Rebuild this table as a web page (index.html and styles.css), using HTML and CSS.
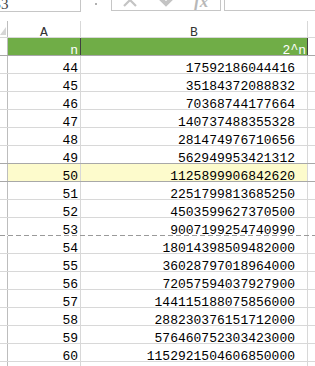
FILE: index.html
```html
<!DOCTYPE html>
<html>
<head>
<meta charset="utf-8">
<link rel="stylesheet" href="styles.css">
</head>
<body>
<div class="toolbar">
  <div class="namebox"><span class="nametext">B3</span></div>
  <div class="dots"><span class="dot"></span></div>
  <div class="fbtns">
    <svg class="ico-x" width="20" height="8" viewBox="0 0 20 8"><path d="M3 -6 L15 6 M15 -6 L3 6" stroke="#c4c4c4" stroke-width="2.2" fill="none"/></svg>
    <svg class="ico-check" width="20" height="8" viewBox="0 0 20 8"><path d="M2 -3 L9 4 L18 -5" stroke="#c4c4c4" stroke-width="4" fill="none"/></svg>
    <span class="fx">fx</span>
  </div>
  <div class="fbar"></div>
</div>

<div class="sheet">
  <div class="row colhdr">
    <div class="c rh"><span class="corner"></span></div>
    <div class="c ca">A</div>
    <div class="c cb">B</div>
    <div class="c cc"></div>
  </div>
  <div class="row title">
    <div class="c rh"></div>
    <div class="c ca">n</div>
    <div class="c cb">2<span class="caret">^</span>n</div>
    <div class="c cc"></div>
  </div>
  <div class="row"><div class="c rh"></div><div class="c ca">44</div><div class="c cb">17592186044416</div><div class="c cc"></div></div>
  <div class="row"><div class="c rh"></div><div class="c ca">45</div><div class="c cb">35184372088832</div><div class="c cc"></div></div>
  <div class="row"><div class="c rh"></div><div class="c ca">46</div><div class="c cb">70368744177664</div><div class="c cc"></div></div>
  <div class="row"><div class="c rh"></div><div class="c ca">47</div><div class="c cb">140737488355328</div><div class="c cc"></div></div>
  <div class="row"><div class="c rh"></div><div class="c ca">48</div><div class="c cb">281474976710656</div><div class="c cc"></div></div>
  <div class="row pre-hl"><div class="c rh"></div><div class="c ca">49</div><div class="c cb">562949953421312</div><div class="c cc"></div></div>
  <div class="row hl"><div class="c rh"></div><div class="c ca">50</div><div class="c cb">1125899906842620</div><div class="c cc"></div></div>
  <div class="row"><div class="c rh"></div><div class="c ca">51</div><div class="c cb">2251799813685250</div><div class="c cc"></div></div>
  <div class="row"><div class="c rh"></div><div class="c ca">52</div><div class="c cb">4503599627370500</div><div class="c cc"></div></div>
  <div class="row brk"><div class="c rh"></div><div class="c ca">53</div><div class="c cb">9007199254740990</div><div class="c cc"></div></div>
  <div class="row"><div class="c rh"></div><div class="c ca">54</div><div class="c cb">18014398509482000</div><div class="c cc"></div></div>
  <div class="row"><div class="c rh"></div><div class="c ca">55</div><div class="c cb">36028797018964000</div><div class="c cc"></div></div>
  <div class="row"><div class="c rh"></div><div class="c ca">56</div><div class="c cb">72057594037927900</div><div class="c cc"></div></div>
  <div class="row"><div class="c rh"></div><div class="c ca">57</div><div class="c cb">144115188075856000</div><div class="c cc"></div></div>
  <div class="row"><div class="c rh"></div><div class="c ca">58</div><div class="c cb">288230376151712000</div><div class="c cc"></div></div>
  <div class="row"><div class="c rh"></div><div class="c ca">59</div><div class="c cb">576460752303423000</div><div class="c cc"></div></div>
  <div class="row"><div class="c rh"></div><div class="c ca">60</div><div class="c cb">1152921504606850000</div><div class="c cc"></div></div>
  <div class="row"><div class="c rh"></div><div class="c ca"></div><div class="c cb"></div><div class="c cc"></div></div>
</div>
</body>
</html>
```
FILE: styles.css
```css
html, body {
  margin: 0;
  padding: 0;
  background: #ffffff;
  overflow: hidden;
}
body {
  width: 315px;
  height: 366px;
  font-family: "Liberation Mono", "DejaVu Sans Mono", monospace;
  font-size: 13px;
  color: #000;
}

/* toolbar */
.toolbar {
  display: flex;
  height: 12px;
  margin-bottom: 9px;
}
.namebox {
  width: 80px;
  height: 11px;
  border-right: 1px solid #c6c6c6;
  border-bottom: 1px solid #c6c6c6;
  overflow: hidden;
}
.nametext {
  display: block;
  font-family: "Liberation Serif", serif;
  font-size: 15px;
  line-height: 8px;
  margin-left: -9px;
  color: #444;
}
.dots {
  width: 30px;
  display: flex;
  justify-content: center;
  padding-top: 3px;
}
.dot {
  width: 2px;
  height: 2px;
  background: #b0b0b0;
}
.fbtns {
  width: 108px;
  height: 10px;
  border: 1px solid #c6c6c6;
  border-top: none;
  display: flex;
  align-items: flex-start;
  overflow: hidden;
}
.ico-x { margin-left: 9px; }
.ico-check { margin-left: 16px; }
.fx {
  margin-left: 17px;
  font-family: "Liberation Serif", serif;
  font-style: italic;
  font-weight: bold;
  font-size: 17px;
  line-height: 3px;
  color: #b8b8b8;
}
.fbar {
  flex: 1;
  margin-left: 3px;
  height: 10px;
  border-left: 1px solid #c6c6c6;
  border-bottom: 1px solid #c6c6c6;
}

/* sheet */
.row {
  display: flex;
  height: 17px;
  border-bottom: 1px solid #d8d8d8;
}
.c {
  height: 13px;
  padding-top: 4px;
  line-height: 17px;
  white-space: nowrap;
}
.rh {
  width: 7px;
  border-right: 1px solid #bdbdbd;
}
.ca {
  width: 70px;
  padding-right: 2px;
  text-align: right;
  border-right: 1px solid #d8d8d8;
}
.cb {
  width: 214px;
  padding-right: 12px;
  text-align: right;
  border-right: 1px solid #d8d8d8;
}
.cc { flex: 1; }

.colhdr {
  height: 16px;
  border-bottom: 1px solid #d8d8d8;
}
.colhdr .c {
  height: 13px;
  padding-top: 3px;
  line-height: 17px;
  color: #333;
  text-align: center;
}
.colhdr .ca { padding-left: 1px; padding-right: 1px; }
.colhdr .cb { padding-left: 6px; padding-right: 6px; }
.colhdr .rh { position: relative; }
.corner {
  position: absolute;
  right: 1px;
  top: 6px;
  width: 0;
  height: 0;
  border-left: 6px solid transparent;
  border-bottom: 8px solid #d6d6d6;
}

.title {
  border-bottom: 1px solid #a8a8a8;
}
.title .ca, .title .cb {
  background: #70ad47;
  color: #ffffff;
  border-right-color: #404040;
}
.title .cb { padding-right: 1px; width: 225px; }
.caret {
  display: inline-block;
  font-size: 13px;
  transform: translateY(-1px);
}

.pre-hl { border-bottom-color: #a8a8a8; }
.hl { border-bottom-color: #a8a8a8; }
.hl .ca, .hl .cb { background: #fdfbcc; }

.brk {
  border-bottom: 1px solid transparent;
  background-image: repeating-linear-gradient(to right, #9a9a9a 0 5px, transparent 5px 8px);
  background-size: 100% 1px;
  background-position: 0 17px;
  background-repeat: no-repeat;
}
```
